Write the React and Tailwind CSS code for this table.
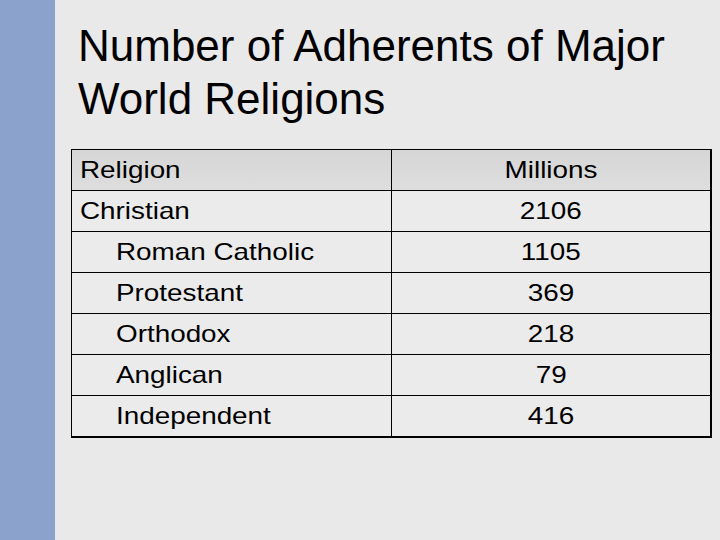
import React from "react";

const rows = [
  { name: "Christian", value: "2106", indent: false },
  { name: "Roman Catholic", value: "1105", indent: true },
  { name: "Protestant", value: "369", indent: true },
  { name: "Orthodox", value: "218", indent: true },
  { name: "Anglican", value: "79", indent: true },
  { name: "Independent", value: "416", indent: true },
];

export default function App() {
  return (
    <div
      className="flex w-[720px] h-[540px] overflow-hidden text-black"
      style={{ fontFamily: '"Liberation Sans", Arial, sans-serif' }}
    >
      {/* side bar */}
      <div className="w-[55px] shrink-0 bg-[#8ba3cc]" />

      <div className="flex-1 bg-[#e9e9e9] pt-[19px] pl-[16px]">
        <h1 className="pl-[7px] text-[44px] leading-[53px] font-normal">
          Number of Adherents of Major
          <br />
          World Religions
        </h1>

        <table className="mt-[24px] w-[641px] border-collapse border-t border-l border-r-2 border-b-2 border-black text-[24px]">
          <tbody>
            <tr className="h-[41px] bg-gradient-to-b from-[#d6d6d6] to-[#dedede]">
              <td className="w-[320px] border-r border-b border-black pl-[8px] align-middle">
                <span className="inline-block origin-left scale-x-[1.16]">Religion</span>
              </td>
              <td className="border-b border-black text-center align-middle">
                <span className="inline-block scale-x-[1.16]">Millions</span>
              </td>
            </tr>
            {rows.map((row, idx) => (
              <tr key={row.name} className="h-[41px] bg-[#ebebeb]">
                <td
                  className={
                    (idx < rows.length - 1 ? "border-b " : "") +
                    "border-r border-black align-middle " +
                    (row.indent ? "pl-[44px]" : "pl-[8px]")
                  }
                >
                  <span className="inline-block origin-left scale-x-[1.16]">{row.name}</span>
                </td>
                <td
                  className={
                    (idx < rows.length - 1 ? "border-b " : "") +
                    "border-black text-center align-middle"
                  }
                >
                  <span className="inline-block scale-x-[1.16]">{row.value}</span>
                </td>
              </tr>
            ))}
          </tbody>
        </table>
      </div>
    </div>
  );
}
